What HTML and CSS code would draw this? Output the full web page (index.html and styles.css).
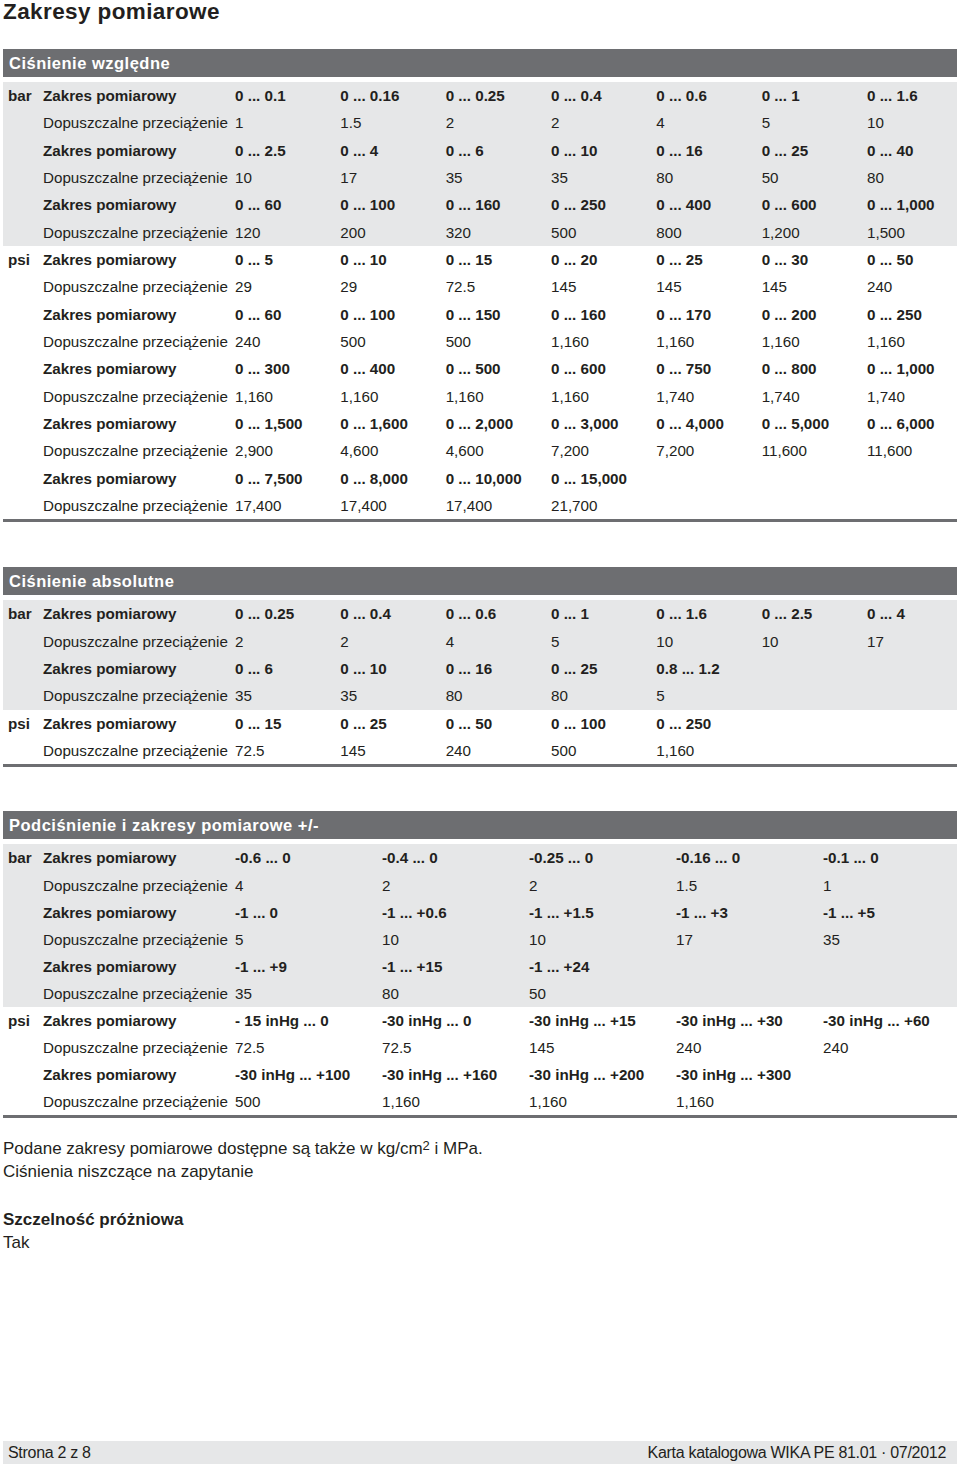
FILE: index.html
```html
<!DOCTYPE html>
<html lang="pl">
<head>
<meta charset="utf-8">
<title>Zakresy pomiarowe</title>
<link rel="stylesheet" href="styles.css">
</head>
<body>
<div class="page">
  <h1 class="title">Zakresy pomiarowe</h1>

  <section class="block block-first">
    <h2 class="block-head">Ciśnienie względne</h2>
    <table class="ranges seven">
      <colgroup><col class="c-unit"><col class="c-label"><col class="c-v7"><col class="c-v7"><col class="c-v7"><col class="c-v7"><col class="c-v7"><col class="c-v7"><col></colgroup>
      <tbody class="shaded">
        <tr class="r"><td class="unit">bar</td><td>Zakres pomiarowy</td><td>0 ... 0.1</td><td>0 ... 0.16</td><td>0 ... 0.25</td><td>0 ... 0.4</td><td>0 ... 0.6</td><td>0 ... 1</td><td>0 ... 1.6</td></tr>
        <tr class="o"><td></td><td>Dopuszczalne przeciążenie</td><td>1</td><td>1.5</td><td>2</td><td>2</td><td>4</td><td>5</td><td>10</td></tr>
        <tr class="r"><td></td><td>Zakres pomiarowy</td><td>0 ... 2.5</td><td>0 ... 4</td><td>0 ... 6</td><td>0 ... 10</td><td>0 ... 16</td><td>0 ... 25</td><td>0 ... 40</td></tr>
        <tr class="o"><td></td><td>Dopuszczalne przeciążenie</td><td>10</td><td>17</td><td>35</td><td>35</td><td>80</td><td>50</td><td>80</td></tr>
        <tr class="r"><td></td><td>Zakres pomiarowy</td><td>0 ... 60</td><td>0 ... 100</td><td>0 ... 160</td><td>0 ... 250</td><td>0 ... 400</td><td>0 ... 600</td><td>0 ... 1,000</td></tr>
        <tr class="o"><td></td><td>Dopuszczalne przeciążenie</td><td>120</td><td>200</td><td>320</td><td>500</td><td>800</td><td>1,200</td><td>1,500</td></tr>
      </tbody>
      <tbody>
        <tr class="r"><td class="unit">psi</td><td>Zakres pomiarowy</td><td>0 ... 5</td><td>0 ... 10</td><td>0 ... 15</td><td>0 ... 20</td><td>0 ... 25</td><td>0 ... 30</td><td>0 ... 50</td></tr>
        <tr class="o"><td></td><td>Dopuszczalne przeciążenie</td><td>29</td><td>29</td><td>72.5</td><td>145</td><td>145</td><td>145</td><td>240</td></tr>
        <tr class="r"><td></td><td>Zakres pomiarowy</td><td>0 ... 60</td><td>0 ... 100</td><td>0 ... 150</td><td>0 ... 160</td><td>0 ... 170</td><td>0 ... 200</td><td>0 ... 250</td></tr>
        <tr class="o"><td></td><td>Dopuszczalne przeciążenie</td><td>240</td><td>500</td><td>500</td><td>1,160</td><td>1,160</td><td>1,160</td><td>1,160</td></tr>
        <tr class="r"><td></td><td>Zakres pomiarowy</td><td>0 ... 300</td><td>0 ... 400</td><td>0 ... 500</td><td>0 ... 600</td><td>0 ... 750</td><td>0 ... 800</td><td>0 ... 1,000</td></tr>
        <tr class="o"><td></td><td>Dopuszczalne przeciążenie</td><td>1,160</td><td>1,160</td><td>1,160</td><td>1,160</td><td>1,740</td><td>1,740</td><td>1,740</td></tr>
        <tr class="r"><td></td><td>Zakres pomiarowy</td><td>0 ... 1,500</td><td>0 ... 1,600</td><td>0 ... 2,000</td><td>0 ... 3,000</td><td>0 ... 4,000</td><td>0 ... 5,000</td><td>0 ... 6,000</td></tr>
        <tr class="o"><td></td><td>Dopuszczalne przeciążenie</td><td>2,900</td><td>4,600</td><td>4,600</td><td>7,200</td><td>7,200</td><td>11,600</td><td>11,600</td></tr>
        <tr class="r"><td></td><td>Zakres pomiarowy</td><td>0 ... 7,500</td><td>0 ... 8,000</td><td>0 ... 10,000</td><td>0 ... 15,000</td><td></td><td></td><td></td></tr>
        <tr class="o"><td></td><td>Dopuszczalne przeciążenie</td><td>17,400</td><td>17,400</td><td>17,400</td><td>21,700</td><td></td><td></td><td></td></tr>
      </tbody>
    </table>
  </section>

  <section class="block">
    <h2 class="block-head">Ciśnienie absolutne</h2>
    <table class="ranges seven">
      <colgroup><col class="c-unit"><col class="c-label"><col class="c-v7"><col class="c-v7"><col class="c-v7"><col class="c-v7"><col class="c-v7"><col class="c-v7"><col></colgroup>
      <tbody class="shaded">
        <tr class="r"><td class="unit">bar</td><td>Zakres pomiarowy</td><td>0 ... 0.25</td><td>0 ... 0.4</td><td>0 ... 0.6</td><td>0 ... 1</td><td>0 ... 1.6</td><td>0 ... 2.5</td><td>0 ... 4</td></tr>
        <tr class="o"><td></td><td>Dopuszczalne przeciążenie</td><td>2</td><td>2</td><td>4</td><td>5</td><td>10</td><td>10</td><td>17</td></tr>
        <tr class="r"><td></td><td>Zakres pomiarowy</td><td>0 ... 6</td><td>0 ... 10</td><td>0 ... 16</td><td>0 ... 25</td><td>0.8 ... 1.2</td><td></td><td></td></tr>
        <tr class="o"><td></td><td>Dopuszczalne przeciążenie</td><td>35</td><td>35</td><td>80</td><td>80</td><td>5</td><td></td><td></td></tr>
      </tbody>
      <tbody>
        <tr class="r"><td class="unit">psi</td><td>Zakres pomiarowy</td><td>0 ... 15</td><td>0 ... 25</td><td>0 ... 50</td><td>0 ... 100</td><td>0 ... 250</td><td></td><td></td></tr>
        <tr class="o"><td></td><td>Dopuszczalne przeciążenie</td><td>72.5</td><td>145</td><td>240</td><td>500</td><td>1,160</td><td></td><td></td></tr>
      </tbody>
    </table>
  </section>

  <section class="block block-vac">
    <h2 class="block-head">Podciśnienie i zakresy pomiarowe +/-</h2>
    <table class="ranges five">
      <colgroup><col class="c-unit"><col class="c-label"><col class="c-v5"><col class="c-v5"><col class="c-v5"><col class="c-v5"><col></colgroup>
      <tbody class="shaded">
        <tr class="r"><td class="unit">bar</td><td>Zakres pomiarowy</td><td>-0.6 ... 0</td><td>-0.4 ... 0</td><td>-0.25 ... 0</td><td>-0.16 ... 0</td><td>-0.1 ... 0</td></tr>
        <tr class="o"><td></td><td>Dopuszczalne przeciążenie</td><td>4</td><td>2</td><td>2</td><td>1.5</td><td>1</td></tr>
        <tr class="r"><td></td><td>Zakres pomiarowy</td><td>-1 ... 0</td><td>-1 ... +0.6</td><td>-1 ... +1.5</td><td>-1 ... +3</td><td>-1 ... +5</td></tr>
        <tr class="o"><td></td><td>Dopuszczalne przeciążenie</td><td>5</td><td>10</td><td>10</td><td>17</td><td>35</td></tr>
        <tr class="r"><td></td><td>Zakres pomiarowy</td><td>-1 ... +9</td><td>-1 ... +15</td><td>-1 ... +24</td><td></td><td></td></tr>
        <tr class="o"><td></td><td>Dopuszczalne przeciążenie</td><td>35</td><td>80</td><td>50</td><td></td><td></td></tr>
      </tbody>
      <tbody class="tight">
        <tr class="r"><td class="unit">psi</td><td>Zakres pomiarowy</td><td>- 15 inHg ... 0</td><td>-30 inHg ... 0</td><td>-30 inHg ... +15</td><td>-30 inHg ... +30</td><td>-30 inHg ... +60</td></tr>
        <tr class="o"><td></td><td>Dopuszczalne przeciążenie</td><td>72.5</td><td>72.5</td><td>145</td><td>240</td><td>240</td></tr>
        <tr class="r"><td></td><td>Zakres pomiarowy</td><td>-30 inHg ... +100</td><td>-30 inHg ... +160</td><td>-30 inHg ... +200</td><td>-30 inHg ... +300</td><td></td></tr>
        <tr class="o"><td></td><td>Dopuszczalne przeciążenie</td><td>500</td><td>1,160</td><td>1,160</td><td>1,160</td><td></td></tr>
      </tbody>
    </table>
  </section>

  <div class="notes">
    <p>Podane zakresy pomiarowe dostępne są także w kg/cm<sup>2</sup> i MPa.</p>
    <p>Ciśnienia niszczące na zapytanie</p>
  </div>

  <div class="notes notes-vac">
    <p class="strong">Szczelność próżniowa</p>
    <p>Tak</p>
  </div>

  <footer class="footer">
    <span>Strona 2 z 8</span>
    <span>Karta katalogowa WIKA PE 81.01 · 07/2012</span>
  </footer>
</div>
</body>
</html>
```

FILE: styles.css
```css
html, body {
  margin: 0;
  padding: 0;
  background: #ffffff;
}

body {
  font-family: "Liberation Sans", Arial, Helvetica, sans-serif;
  color: #231f20;
}

.page {
  box-sizing: border-box;
  width: 960px;
  min-height: 1466px;
  padding: 0 3px 2px 3px;
  display: flex;
  flex-direction: column;
}

.title {
  margin: 0;
  font-size: 22.5px;
  line-height: 24px;
  font-weight: bold;
  letter-spacing: 0.4px;
  height: 24px;
}

.block {
  margin-top: 45px;
  border-bottom: 3px solid #6d6e71;
}

.block-first {
  margin-top: 25px;
}

.block-vac {
  margin-top: 44px;
}

.block-head {
  margin: 0 0 5px 0;
  height: 28px;
  background: #6d6e71;
  color: #ffffff;
  font-size: 16.5px;
  line-height: 29px;
  font-weight: bold;
  padding-left: 6px;
  letter-spacing: 0.5px;
}

.ranges {
  width: 954px;
  border-collapse: collapse;
  table-layout: fixed;
  font-size: 15.2px;
}

.c-unit { width: 40px; }
.c-label { width: 192px; }
.c-v7 { width: 105.33px; }
.c-v5 { width: 147px; }

.ranges td {
  padding: 0;
  height: 27.33px;
  line-height: 27px;
  white-space: nowrap;
  vertical-align: middle;
}

.ranges td.unit {
  padding-left: 5px;
}

.ranges tr.r td {
  font-weight: bold;
}

.ranges tr.o td {
  font-weight: normal;
}

.ranges tbody.shaded td {
  background: #e6e7e8;
}

.ranges.five td {
  height: 27.2px;
}

.ranges.five tbody.tight td {
  height: 26.4px;
}

.notes {
  margin-top: 19px;
  font-size: 17px;
  line-height: 23px;
}

.notes p {
  margin: 0;
}

.notes sup {
  font-size: 13px;
  line-height: 0;
  vertical-align: 4px;
}

.notes-vac {
  margin-top: 25px;
}

.notes .strong {
  font-weight: bold;
}

.footer {
  margin-top: auto;
  height: 23px;
  background: #e6e7e8;
  display: flex;
  justify-content: space-between;
  align-items: center;
  padding: 0 11px 0 5px;
  font-family: "Liberation Sans Narrow", "Liberation Sans", Arial, sans-serif;
  font-stretch: condensed;
  font-size: 16px;
  letter-spacing: -0.3px;
  color: #231f20;
}
```
